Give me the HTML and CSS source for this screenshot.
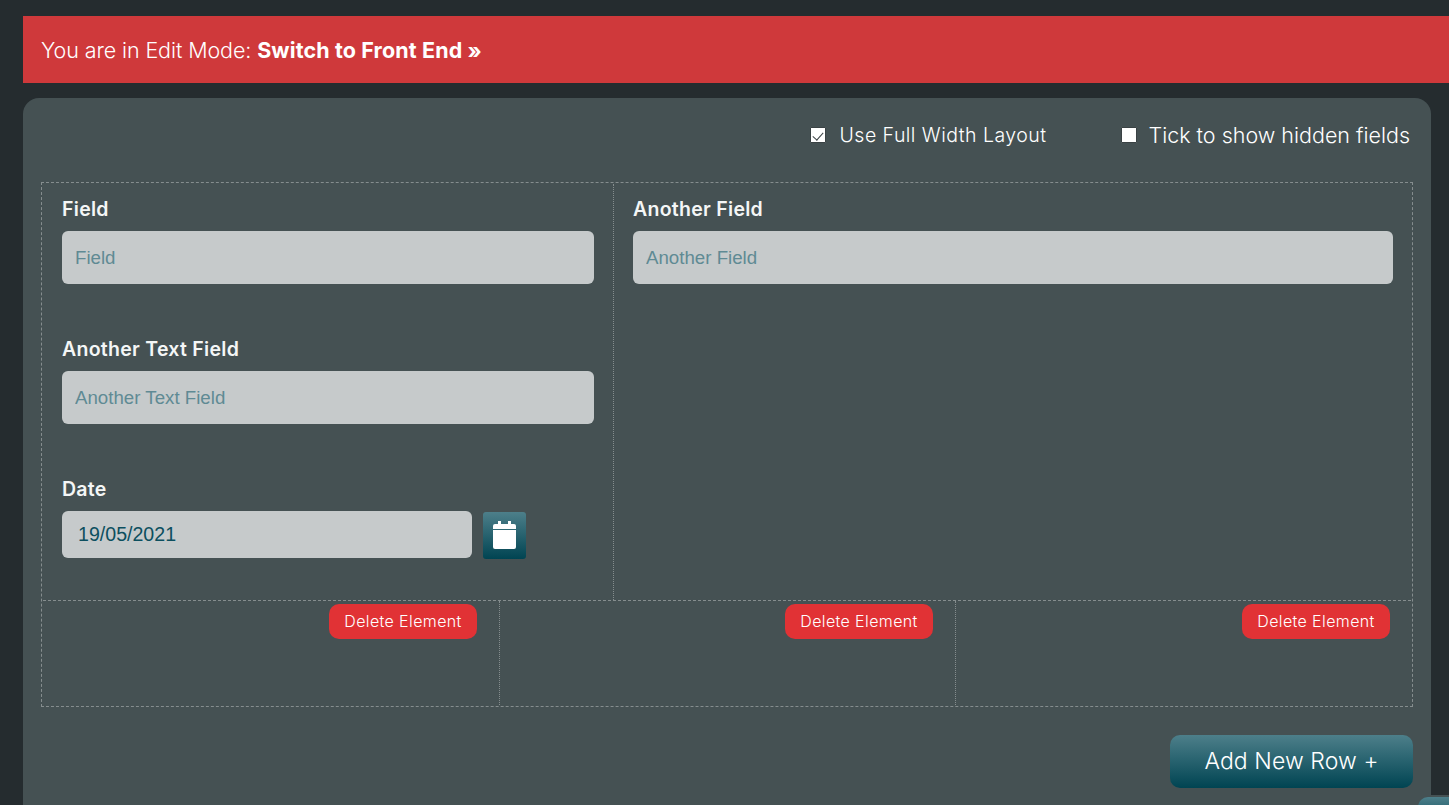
FILE: index.html
```html
<!DOCTYPE html>
<html lang="en">
<head>
<meta charset="utf-8">
<title>Edit Mode</title>
<link rel="stylesheet" href="styles.css">
</head>
<body>
<div class="banner">You are in Edit Mode: <a class="banner-link" href="#">Switch to Front End »</a></div>
<main class="panel">
  <div class="options">
    <label class="opt opt-layout"><input class="check" type="checkbox" checked><span>Use Full Width Layout</span></label>
    <label class="opt opt-hidden"><input class="check" type="checkbox"><span>Tick to show hidden fields</span></label>
  </div>
  <div class="builder">
    <div class="row row-two">
      <div class="col">
        <div class="field">
          <label class="field-label">Field</label>
          <input class="text-input" type="text" placeholder="Field">
        </div>
        <div class="field">
          <label class="field-label">Another Text Field</label>
          <input class="text-input" type="text" placeholder="Another Text Field">
        </div>
        <div class="field">
          <label class="field-label">Date</label>
          <div class="date-line">
            <input class="text-input date-input" type="text" value="19/05/2021">
            <button class="cal-btn" type="button" aria-label="Pick date">
              <svg class="cal-icon" width="23" height="28" viewBox="0 0 23 28">
                <path fill="#fff" d="M5 0h3v4H5zM15 0h3v4h-3z"/>
                <path fill="#fff" d="M2 3h19a2 2 0 0 1 2 2v3H0V5a2 2 0 0 1 2-2z"/>
                <path fill="#fff" d="M0 9h23v17a2 2 0 0 1-2 2H2a2 2 0 0 1-2-2z"/>
              </svg>
            </button>
          </div>
        </div>
      </div>
      <div class="col col-right">
        <div class="field">
          <label class="field-label">Another Field</label>
          <input class="text-input" type="text" placeholder="Another Field">
        </div>
      </div>
    </div>
    <div class="row row-three">
      <div class="cell cell-a"><button class="del-btn" type="button">Delete Element</button></div>
      <div class="cell cell-b"><button class="del-btn" type="button">Delete Element</button></div>
      <div class="cell cell-c"><button class="del-btn" type="button">Delete Element</button></div>
    </div>
  </div>
  <div class="actions"><button class="add-btn" type="button">Add New Row +</button></div>
</main>
<div class="footer-bar"><span class="footer-tab"></span></div>
</body>
</html>
```
FILE: styles.css
```css
* { box-sizing: border-box; }
html, body { height: 100%; }
body {
  margin: 0;
  height: 805px;
  overflow: hidden;
  padding: 16px 18px 0 23px;
  background: #252c2f;
  color: #fff;
  font-family: Inter, "Open Sans", sans-serif;
  position: relative;
}
.banner {
  height: 67px;
  margin-right: -18px;
  padding-left: 18px;
  display: flex;
  align-items: center;
  white-space: pre;
  background: #cf393b;
  font-size: 21.5px;
  font-weight: 300;
  letter-spacing: -0.1px;
}
.banner-link { color: #fff; font-weight: 700; text-decoration: none; letter-spacing: 0.12px; }
.panel {
  margin-top: 15px;
  height: 720px;
  padding: 0 18px;
  background: #455153;
  border-radius: 16px 16px 0 0;
}
.options {
  height: 84px;
  display: flex;
  justify-content: flex-end;
  padding: 27px 3px 0 0;
}
.opt { display: flex; align-items: flex-start; font-weight: 300; }
.check {
  appearance: none;
  position: relative;
  width: 16px;
  height: 16px;
  margin: 2px 0 0;
  flex: none;
  background: #fff;
  border: 1px solid #3a4244;
  border-radius: 1px;
}
.check:checked::after {
  content: "";
  position: absolute;
  left: 4px;
  top: 1.5px;
  width: 5px;
  height: 9px;
  border: solid #3a4244;
  border-width: 0 1.5px 1.5px 0;
  transform: rotate(42deg);
}
.opt-layout { font-size: 19.5px; letter-spacing: 0.47px; margin-right: 74px; line-height: 20px; }
.opt-layout .check { margin-right: 14px; }
.opt-hidden { font-size: 21.5px; line-height: 20px; }
.opt-hidden .check { margin-right: 12px; }
.builder {
  border: 1px dashed #858d8e;
  padding: 1px;
  height: 525px;
}
.row-two {
  display: grid;
  grid-template-columns: 570px 1fr;
  height: 417px;
  border-bottom: 1px dashed #858d8e;
}
.col { padding: 14px 19px 0 19px; }
.col-right { border-left: 1px dotted #858d8e; padding-right: 18px; }
.field { height: 140px; }
.field:last-child { height: auto; }
.field-label {
  display: block;
  font-size: 19.5px;
  font-weight: 600;
  letter-spacing: 0.28px;
  line-height: 22px;
  margin-bottom: 11px;
  color: #f4f6f6;
}
.text-input {
  display: block;
  width: 100%;
  height: 53px;
  padding: 0 13px;
  border: 0;
  border-radius: 6px;
  background: #c6cacb;
  font-family: "Liberation Sans", Arial, sans-serif;
  font-size: 18.7px;
  color: #0c4f5f;
}
.text-input::placeholder { color: #5f8a94; opacity: 1; }
.date-line { display: flex; align-items: flex-start; gap: 11px; }
.date-input {
  width: 410px;
  height: 47px;
  padding: 0 16px;
  font-size: 19.6px;
}
.cal-btn {
  width: 43px;
  height: 47px;
  margin-top: 1px;
  padding: 9px 0 0;
  border: 0;
  border-radius: 3px;
  background: linear-gradient(#4d7f8a, #004452);
  display: flex;
  justify-content: center;
  align-items: flex-start;
}
.cal-icon { display: block; }
.row-three {
  display: grid;
  grid-template-columns: 456px 456px 1fr;
  height: 104px;
}
.cell { display: flex; justify-content: flex-end; padding-top: 3px; }
.cell-a { padding-right: 22px; }
.cell-b { padding-right: 22px; border-left: 1px dotted #858d8e; }
.cell-c { padding-right: 21px; border-left: 1px dotted #858d8e; }
.del-btn {
  width: 148px;
  height: 35px;
  padding: 0 0 2px;
  border: 0;
  border-radius: 10px;
  background: #e13235;
  color: #fff;
  font-family: Inter, "Open Sans", sans-serif;
  font-size: 16px;
  font-weight: 300;
  letter-spacing: 0.38px;
}
.actions { display: flex; justify-content: flex-end; padding-top: 28px; }
.add-btn {
  width: 243px;
  height: 53px;
  padding: 0 0 2px;
  border: 0;
  border-radius: 10px;
  background: linear-gradient(#4d7f8a, #004452);
  color: #fff;
  font-family: Inter, "Open Sans", sans-serif;
  font-size: 23px;
  font-weight: 300;
  letter-spacing: 0.1px;
}
.footer-bar {
  position: absolute;
  left: 23px;
  right: 0;
  top: 795px;
  height: 10px;
  background: #455153;
}
.footer-tab {
  position: absolute;
  left: 1395px;
  top: 2px;
  width: 60px;
  height: 30px;
  border-radius: 10px 0 0 0;
  background: linear-gradient(#4d7f8a, #004452);
}
```
